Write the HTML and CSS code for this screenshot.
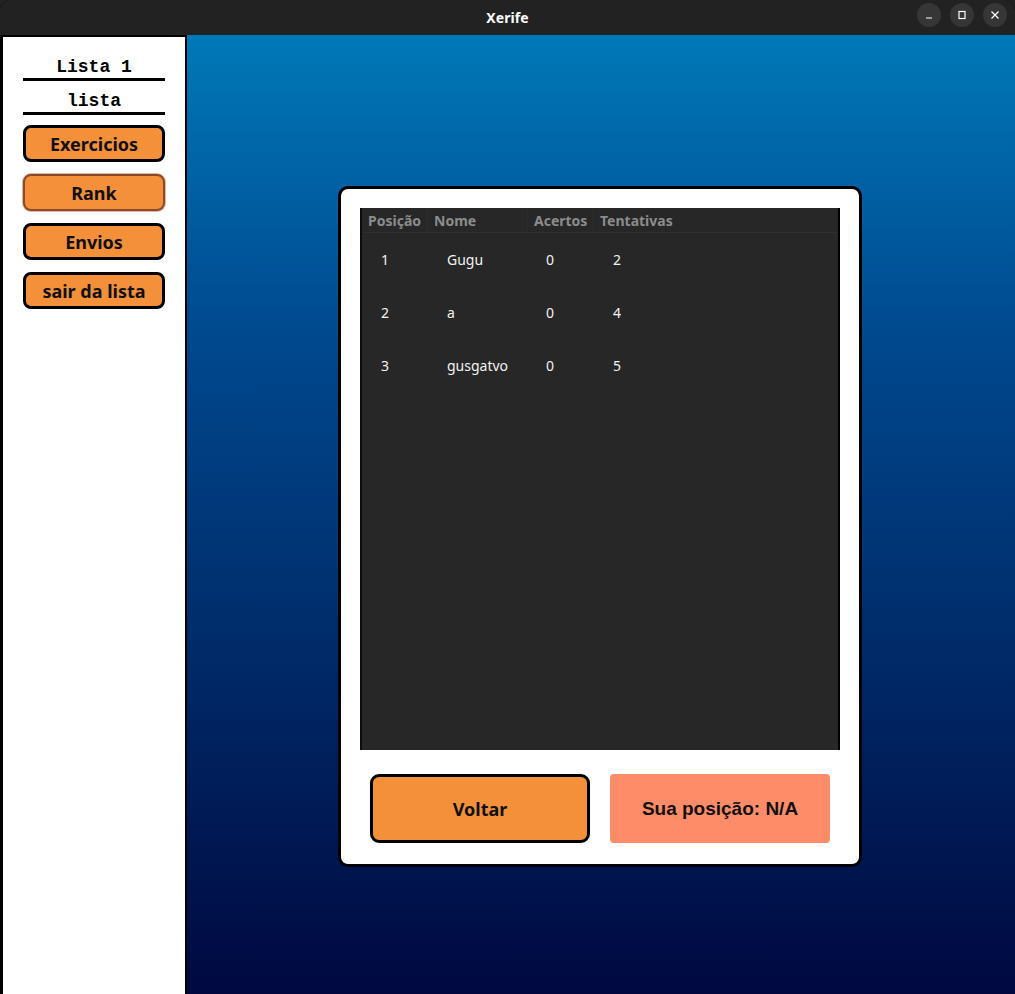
FILE: index.html
```html
<!DOCTYPE html>
<html lang="pt">
<head>
<meta charset="utf-8">
<title>Xerife</title>
<link rel="stylesheet" href="styles.css">
</head>
<body>
<div class="window">
  <header class="titlebar">
    <span class="title">Xerife</span>
    <div class="controls">
      <span class="ctl"><svg width="10" height="10" viewBox="0 0 10 10"><path d="M2 8h6" stroke="#fff" stroke-width="1.2"/></svg></span>
      <span class="ctl"><svg width="10" height="10" viewBox="0 0 10 10"><rect x="2" y="1.5" width="6" height="7" fill="none" stroke="#fff" stroke-width="1.2"/></svg></span>
      <span class="ctl"><svg width="10" height="10" viewBox="0 0 10 10"><path d="M1.5 1.5l7 7M8.5 1.5l-7 7" stroke="#fff" stroke-width="1.2"/></svg></span>
    </div>
  </header>
  <div class="app">
    <aside class="sidebar">
      <div class="label">Lista 1</div>
      <div class="label">lista</div>
      <button class="side-btn">Exercicios</button>
      <button class="side-btn focused">Rank</button>
      <button class="side-btn">Envios</button>
      <button class="side-btn">sair da lista</button>
    </aside>
    <main class="main">
      <section class="card">
        <div class="table">
          <div class="thead">
            <span class="c1">Posição</span>
            <span class="c2">Nome</span>
            <span class="c3">Acertos</span>
            <span class="c4">Tentativas</span>
          </div>
          <div class="row"><span class="c1">1</span><span class="c2">Gugu</span><span class="c3">0</span><span class="c4">2</span></div>
          <div class="row"><span class="c1">2</span><span class="c2">a</span><span class="c3">0</span><span class="c4">4</span></div>
          <div class="row"><span class="c1">3</span><span class="c2">gusgatvo</span><span class="c3">0</span><span class="c4">5</span></div>
        </div>
        <div class="actions">
          <button class="voltar">Voltar</button>
          <div class="pos">Sua posição: N/A</div>
        </div>
      </section>
    </main>
  </div>
</div>
</body>
</html>
```

FILE: styles.css
```css
* { box-sizing: border-box; }
html, body { margin: 0; padding: 0; }
body {
  width: 1015px;
  height: 994px;
  overflow: hidden;
  background: #222222;
  font-family: "Noto Sans", "DejaVu Sans", sans-serif;
}
.window {
  width: 1015px;
  height: 994px;
  display: flex;
  flex-direction: column;
  border-radius: 10px 10px 0 0;
  overflow: hidden;
  background: #000;
}
.titlebar {
  height: 35px;
  flex: none;
  background: #222222;
  position: relative;
  display: flex;
  align-items: center;
  justify-content: center;
}
.title {
  color: #ffffff;
  font-weight: bold;
  font-size: 14px;
  letter-spacing: 0.1px;
}
.controls {
  position: absolute;
  right: 8px;
  top: 3px;
  display: flex;
  gap: 9px;
}
.ctl {
  width: 24px;
  height: 24px;
  border-radius: 50%;
  background: #363636;
  display: flex;
  align-items: center;
  justify-content: center;
}
.app {
  flex: 1;
  display: flex;
}
.sidebar {
  width: 187px;
  flex: none;
  background: #ffffff;
  border-left: 3px solid #000;
  border-top: 2px solid #000;
  border-right: 2px solid #000;
  display: flex;
  flex-direction: column;
  align-items: center;
  padding-top: 19px;
}
.label {
  width: 142px;
  font-family: "Liberation Mono", monospace;
  font-weight: bold;
  font-size: 18px;
  text-align: center;
  color: #000;
  line-height: 20px;
  padding-top: 1px;
  padding-bottom: 1px;
  border-bottom: 3px solid #000;
  margin-bottom: 9px;
}
.side-btn {
  width: 142px;
  height: 37px;
  margin-top: 1px;
  margin-bottom: 11px;
  background: #f39039;
  border: 3px solid #000;
  border-radius: 8px;
  font-family: "Noto Sans", "DejaVu Sans", sans-serif;
  font-weight: bold;
  font-size: 18px;
  color: #111;
  padding: 0;
  line-height: 1;
}
.side-btn.focused {
  border: 2px solid #8a4a30;
  box-shadow: 0 0 0 1px #e7b49a;
}
.main {
  flex: 1;
  background: linear-gradient(to bottom, #0079b8 0%, #004a90 30%, #002a68 65%, #000840 100%);
  display: flex;
  justify-content: flex-start;
  align-items: flex-start;
  padding-top: 151px;
  padding-left: 151px;
}
.card {
  width: 524px;
  height: 681px;
  background: #ffffff;
  border: 3px solid #000;
  border-radius: 10px;
  padding: 19px 19px 20px 19px;
  display: flex;
  flex-direction: column;
}
.table {
  width: 480px;
  height: 542px;
  background: #272727;
  border-left: 2px solid #0c0c0c;
  border-right: 2px solid #000;
  font-size: 14px;
  color: #f2f2f2;
}
.thead {
  height: 25px;
  display: flex;
  align-items: center;
  border-bottom: 1px solid #2f2f2f;
  color: #8c8c8c;
  font-weight: bold;
}
.thead span {
  height: 100%;
  display: flex;
  align-items: center;
  padding-left: 6px;
  border-right: 1px solid #2c2c2c;
}
.thead .c1 { width: 66px; }
.thead .c2 { width: 100px; }
.thead .c3 { width: 66px; }
.thead .c4 { width: 90px; border-right: none; }
.row {
  height: 53px;
  display: flex;
  align-items: center;
}
.row span:nth-child(1) { width: 85px; padding-left: 19px; }
.row span:nth-child(2) { width: 99px; }
.row span:nth-child(3) { width: 67px; }
.row span:nth-child(4) { width: 60px; }
.actions {
  display: flex;
  gap: 20px;
  margin-top: 24px;
  padding-left: 10px;
}
.voltar {
  width: 220px;
  height: 69px;
  background: #f39039;
  border: 3px solid #000;
  border-radius: 9px;
  font-family: "Noto Sans", "DejaVu Sans", sans-serif;
  font-weight: bold;
  font-size: 18px;
  color: #111;
  padding: 0;
}
.pos {
  width: 220px;
  height: 69px;
  background: #ff8c69;
  border-radius: 4px;
  display: flex;
  align-items: center;
  justify-content: center;
  font-family: "Liberation Sans", Arial, sans-serif;
  font-weight: bold;
  font-size: 19px;
  color: #111;
}
```
